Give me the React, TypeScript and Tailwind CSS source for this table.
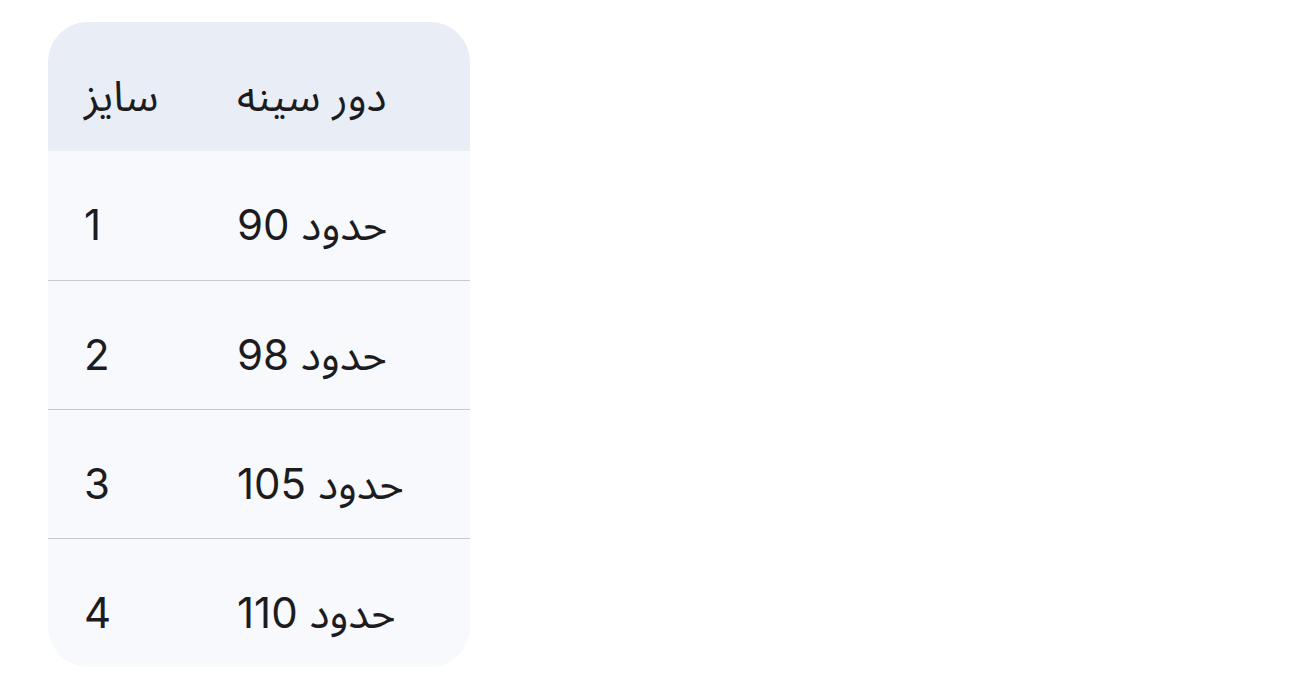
import React from 'react';

const rows = [
  { size: '1', chest: 'حدود 90' },
  { size: '2', chest: 'حدود 98' },
  { size: '3', chest: 'حدود 105' },
  { size: '4', chest: 'حدود 110' },
];

export default function App() {
  return (
    <div
      className="min-h-screen bg-white pl-[48px] pt-[22px] text-[#1c1c1e]"
      style={{ fontFamily: "Inter, 'Noto Sans Arabic', 'DejaVu Sans', sans-serif" }}
    >
      <div className="w-[422px] overflow-hidden rounded-[40px] bg-[#f7f9fd]">
        {/* Header */}
        <div className="grid h-[129px] grid-cols-[153px_1fr] items-center bg-[#e8edf6] text-[42px] leading-none">
          <div className="pl-[36px] pt-[19px]">سایز</div>
          <div className="pl-[36px] pt-[19px]">دور سینه</div>
        </div>

        {/* Body */}
        {rows.map((r, i) => (
          <div
            key={r.size}
            className={`grid h-[129px] grid-cols-[153px_1fr] items-center text-[42px] leading-none ${
              i > 0 ? 'border-t border-[#c9c9cd]' : ''
            }`}
          >
            <div className="pl-[36px] pt-[19px]">{r.size}</div>
            <div className="pl-[36px] pt-[19px]">{r.chest}</div>
          </div>
        ))}
      </div>
    </div>
  );
}
